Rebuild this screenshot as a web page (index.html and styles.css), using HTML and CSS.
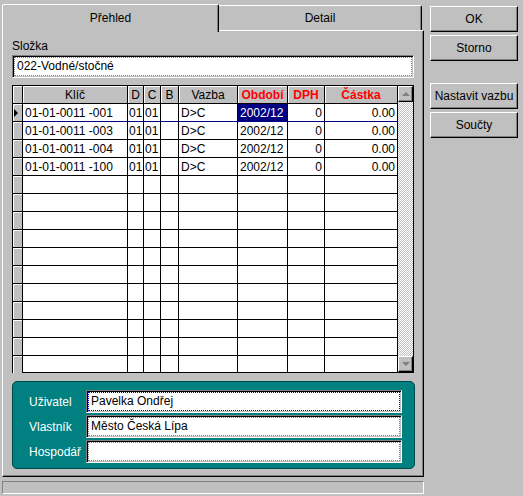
FILE: index.html
```html
<!DOCTYPE html>
<html lang="cs">
<head>
    <meta charset="UTF-8">
    <title>Přehled</title>
    <link rel="stylesheet" href="styles.css">
</head>
<body>
    <div class="window">
        <div class="tabs">
            <div class="tab-strip">
                <div class="tab active">Přehled</div>
                <div class="tab">Detail</div>
            </div>
            <div class="page">
                <div class="field-label">Složka</div>
                <div class="edit focus-gray">022-Vodné/stočné</div>

                <div class="grid">
                    <table class="grid-table">
                        <thead>
                            <tr>
                                <th class="ind"></th>
                                <th class="c-key">Klíč</th>
                                <th class="c-d">D</th>
                                <th class="c-c">C</th>
                                <th class="c-b">B</th>
                                <th class="c-vazba">Vazba</th>
                                <th class="c-obd red">Období</th>
                                <th class="c-dph red">DPH</th>
                                <th class="c-cast red">Částka</th>
                            </tr>
                        </thead>
                        <tbody id="rows"></tbody>
                    </table>
                    <div class="scrollbar">
                        <div class="sb-btn"><span class="arrow up"></span></div>
                        <div class="sb-track"></div>
                        <div class="sb-btn"><span class="arrow down"></span></div>
                    </div>
                </div>

                <div class="owner-panel">
                    <div class="owner-row">
                        <span class="owner-label">Uživatel</span>
                        <div class="edit small focus-blue">Pavelka Ondřej</div>
                    </div>
                    <div class="owner-row">
                        <span class="owner-label">Vlastník</span>
                        <div class="edit small focus-blue-top">Město Česká Lípa</div>
                    </div>
                    <div class="owner-row">
                        <span class="owner-label">Hospodář</span>
                        <div class="edit small focus-gray"></div>
                    </div>
                </div>
            </div>
            <div class="status-bar"></div>
        </div>

        <div class="side">
            <button class="btn">OK</button>
            <button class="btn">Storno</button>
            <button class="btn gap">Nastavit vazbu</button>
            <button class="btn">Součty</button>
        </div>
    </div>

    <script>
        // Rows of the grid, the rest are empty lines
        const data = [
            ['01-01-0011 -001', '01', '01', '', 'D>C', '2002/12', '0', '0.00'],
            ['01-01-0011 -003', '01', '01', '', 'D>C', '2002/12', '0', '0.00'],
            ['01-01-0011 -004', '01', '01', '', 'D>C', '2002/12', '0', '0.00'],
            ['01-01-0011 -100', '01', '01', '', 'D>C', '2002/12', '0', '0.00']
        ];
        const aligns = ['', 'tight', 'tight', 'tight', '', '', 'num', 'num'];
        const body = document.getElementById('rows');

        for (let i = 0; i < 15; i++) {
            const tr = document.createElement('tr');
            if (i === 0) tr.classList.add('current');
            const ind = document.createElement('td');
            ind.className = 'ind';
            if (i === 0) ind.innerHTML = '<span class="pointer"></span>';
            tr.appendChild(ind);
            const row = data[i] || ['', '', '', '', '', '', '', ''];
            row.forEach((val, j) => {
                const td = document.createElement('td');
                td.textContent = val;
                if (aligns[j]) td.classList.add(aligns[j]);
                if (i === 0 && j === 5) td.classList.add('selected');
                tr.appendChild(td);
            });
            body.appendChild(tr);
        }
    </script>
</body>
</html>
```

FILE: styles.css
```css
body {
    margin: 0;
    width: 523px;
    height: 496px;
    background-color: #c0c0c0;
    font-family: "Liberation Sans", Arial, sans-serif;
    font-size: 11px;
    color: #000;
    overflow: hidden;
}

.window {
    display: flex;
    padding: 4px 0 0 2px;
}

.tabs {
    width: 422px;
}

.tab-strip {
    display: flex;
    height: 26px;
    align-items: flex-end;
}

.tab {
    box-sizing: border-box;
    height: 25px;
    width: 203px;
    border-top: 1px solid #fff;
    border-right: 1px solid #000;
    box-shadow: inset -1px 0 #808080;
    border-top-right-radius: 2px;
    display: flex;
    align-items: center;
    justify-content: center;
    font-size: 12px;
}

.tab.active {
    position: relative;
    z-index: 1;
    width: 217px;
    height: 28px;
    margin-bottom: -2px;
    border-left: 1px solid #fff;
    border-right: 1px solid #000;
    border-top-left-radius: 2px;
    background-color: #c0c0c0;
    padding-bottom: 2px;
}

.page {
    box-sizing: border-box;
    height: 447px;
    border-left: 1px solid #fff;
    border-top: 1px solid #fff;
    border-right: 1px solid #000;
    border-bottom: 1px solid #000;
    box-shadow: inset -1px -1px #808080;
    padding: 7px 8px 0 9px;
}

.field-label {
    font-size: 12px;
    height: 17px;
    line-height: 17px;
}

.edit {
    box-sizing: border-box;
    height: 23px;
    width: 402px;
    background-color: #fff;
    border: 1px solid;
    border-color: #808080 #fff #fff #808080;
    box-shadow: inset 1px 1px #000, inset -1px -1px #c0c0c0;
    padding: 0 4px;
    line-height: 21px;
    font-size: 12px;
    outline-offset: -3px;
}

.focus-gray {
    outline: 1px dotted #808080;
}

.focus-blue {
    outline: 1px dotted #0000ff;
}

.focus-blue-top {
    outline: 1px dotted #808080;
    border-top-color: #0000ff;
}

/* grid */
.grid {
    display: flex;
    margin-top: 7px;
    width: 402px;
    height: 288px;
    box-sizing: border-box;
    border: 1px solid #000;
    background-color: #fff;
}

.grid-table {
    border-collapse: collapse;
    table-layout: fixed;
    width: 385px;
    height: 286px;
    font-size: 12px;
}

.grid-table th,
.grid-table td {
    border: 1px solid #000;
    height: 17px;
    padding: 0 2px;
    white-space: nowrap;
    overflow: hidden;
}

.grid-table thead th {
    border-top: none;
}

.grid-table th {
    background-color: #c0c0c0;
    font-weight: normal;
    box-shadow: inset 1px 1px #fff;
    text-align: center;
    padding: 0;
}

.grid-table th.red {
    color: #ff0000;
    font-weight: bold;
}

.grid-table .ind {
    width: 9px;
    border-left: none;
    background-color: #c0c0c0;
    box-shadow: inset 1px 1px #fff;
    position: relative;
}

.c-key { width: 104px; }
.c-d { width: 15px; }
.c-c { width: 16px; }
.c-b { width: 17px; }
.c-vazba { width: 58px; }
.c-obd { width: 49px; }
.c-dph { width: 36px; }
.c-cast { width: 72px; }

.grid-table td.tight {
    padding: 0 0 0 1px;
}

.grid-table td.num {
    text-align: right;
}

.grid-table td:last-child,
.grid-table th:last-child {
    border-right: none;
}

.grid-table tr:last-child td {
    border-bottom: none;
}

.grid-table tr.current td {
    border-bottom-color: #000080;
}

.grid-table tr.current td.ind {
    border-bottom-color: #000;
}

.grid-table td.selected {
    background-color: #000080;
    color: #fff;
}

.pointer {
    position: absolute;
    left: 1px;
    top: 5px;
    border-left: 4px solid #000;
    border-top: 4px solid transparent;
    border-bottom: 4px solid transparent;
}

.scrollbar {
    width: 16px;
    display: flex;
    flex-direction: column;
    border-left: 1px solid #000;
}

.sb-btn {
    box-sizing: border-box;
    height: 16px;
    background-color: #c0c0c0;
    border: 1px solid;
    border-color: #fff #000 #000 #fff;
    box-shadow: inset -1px -1px #808080;
    display: flex;
    align-items: center;
    justify-content: center;
}

.sb-track {
    flex: 1;
    background-color: #fff;
    background-image: repeating-conic-gradient(#c0c0c0 0% 25%, #fff 0% 50%);
    background-size: 2px 2px;
}

.arrow {
    width: 0;
    height: 0;
    border-left: 4px solid transparent;
    border-right: 4px solid transparent;
}

.arrow.up {
    border-bottom: 4px solid #808080;
}

.arrow.down {
    border-top: 4px solid #808080;
}

/* owner panel */
.owner-panel {
    box-sizing: border-box;
    margin-top: 8px;
    width: 403px;
    height: 88px;
    background-color: #008080;
    border: 1px solid #004848;
    border-radius: 5px;
    padding: 7px 0 0 16px;
}

.owner-row {
    display: flex;
    align-items: center;
    height: 25px;
}

.owner-label {
    width: 57px;
    color: #fff;
    font-size: 12px;
}

.edit.small {
    width: 316px;
    height: 23px;
    border-color: #808080 #fff #fff #808080;
}

.status-bar {
    box-sizing: border-box;
    margin-top: 4px;
    height: 13px;
    width: 422px;
    border: 1px solid;
    border-color: #808080 #fff #fff #808080;
}

/* right buttons */
.side {
    display: flex;
    flex-direction: column;
    margin-left: 6px;
    margin-top: 2px;
}

.btn {
    box-sizing: border-box;
    width: 88px;
    height: 26px;
    margin-bottom: 3px;
    background-color: #c0c0c0;
    border: 1px solid;
    border-color: #fff #000 #000 #fff;
    box-shadow: inset -1px -1px #808080;
    font-family: "Liberation Sans", Arial, sans-serif;
    font-size: 12px;
    padding: 0;
    color: #000;
}

.btn.gap {
    margin-top: 19px;
}
```
